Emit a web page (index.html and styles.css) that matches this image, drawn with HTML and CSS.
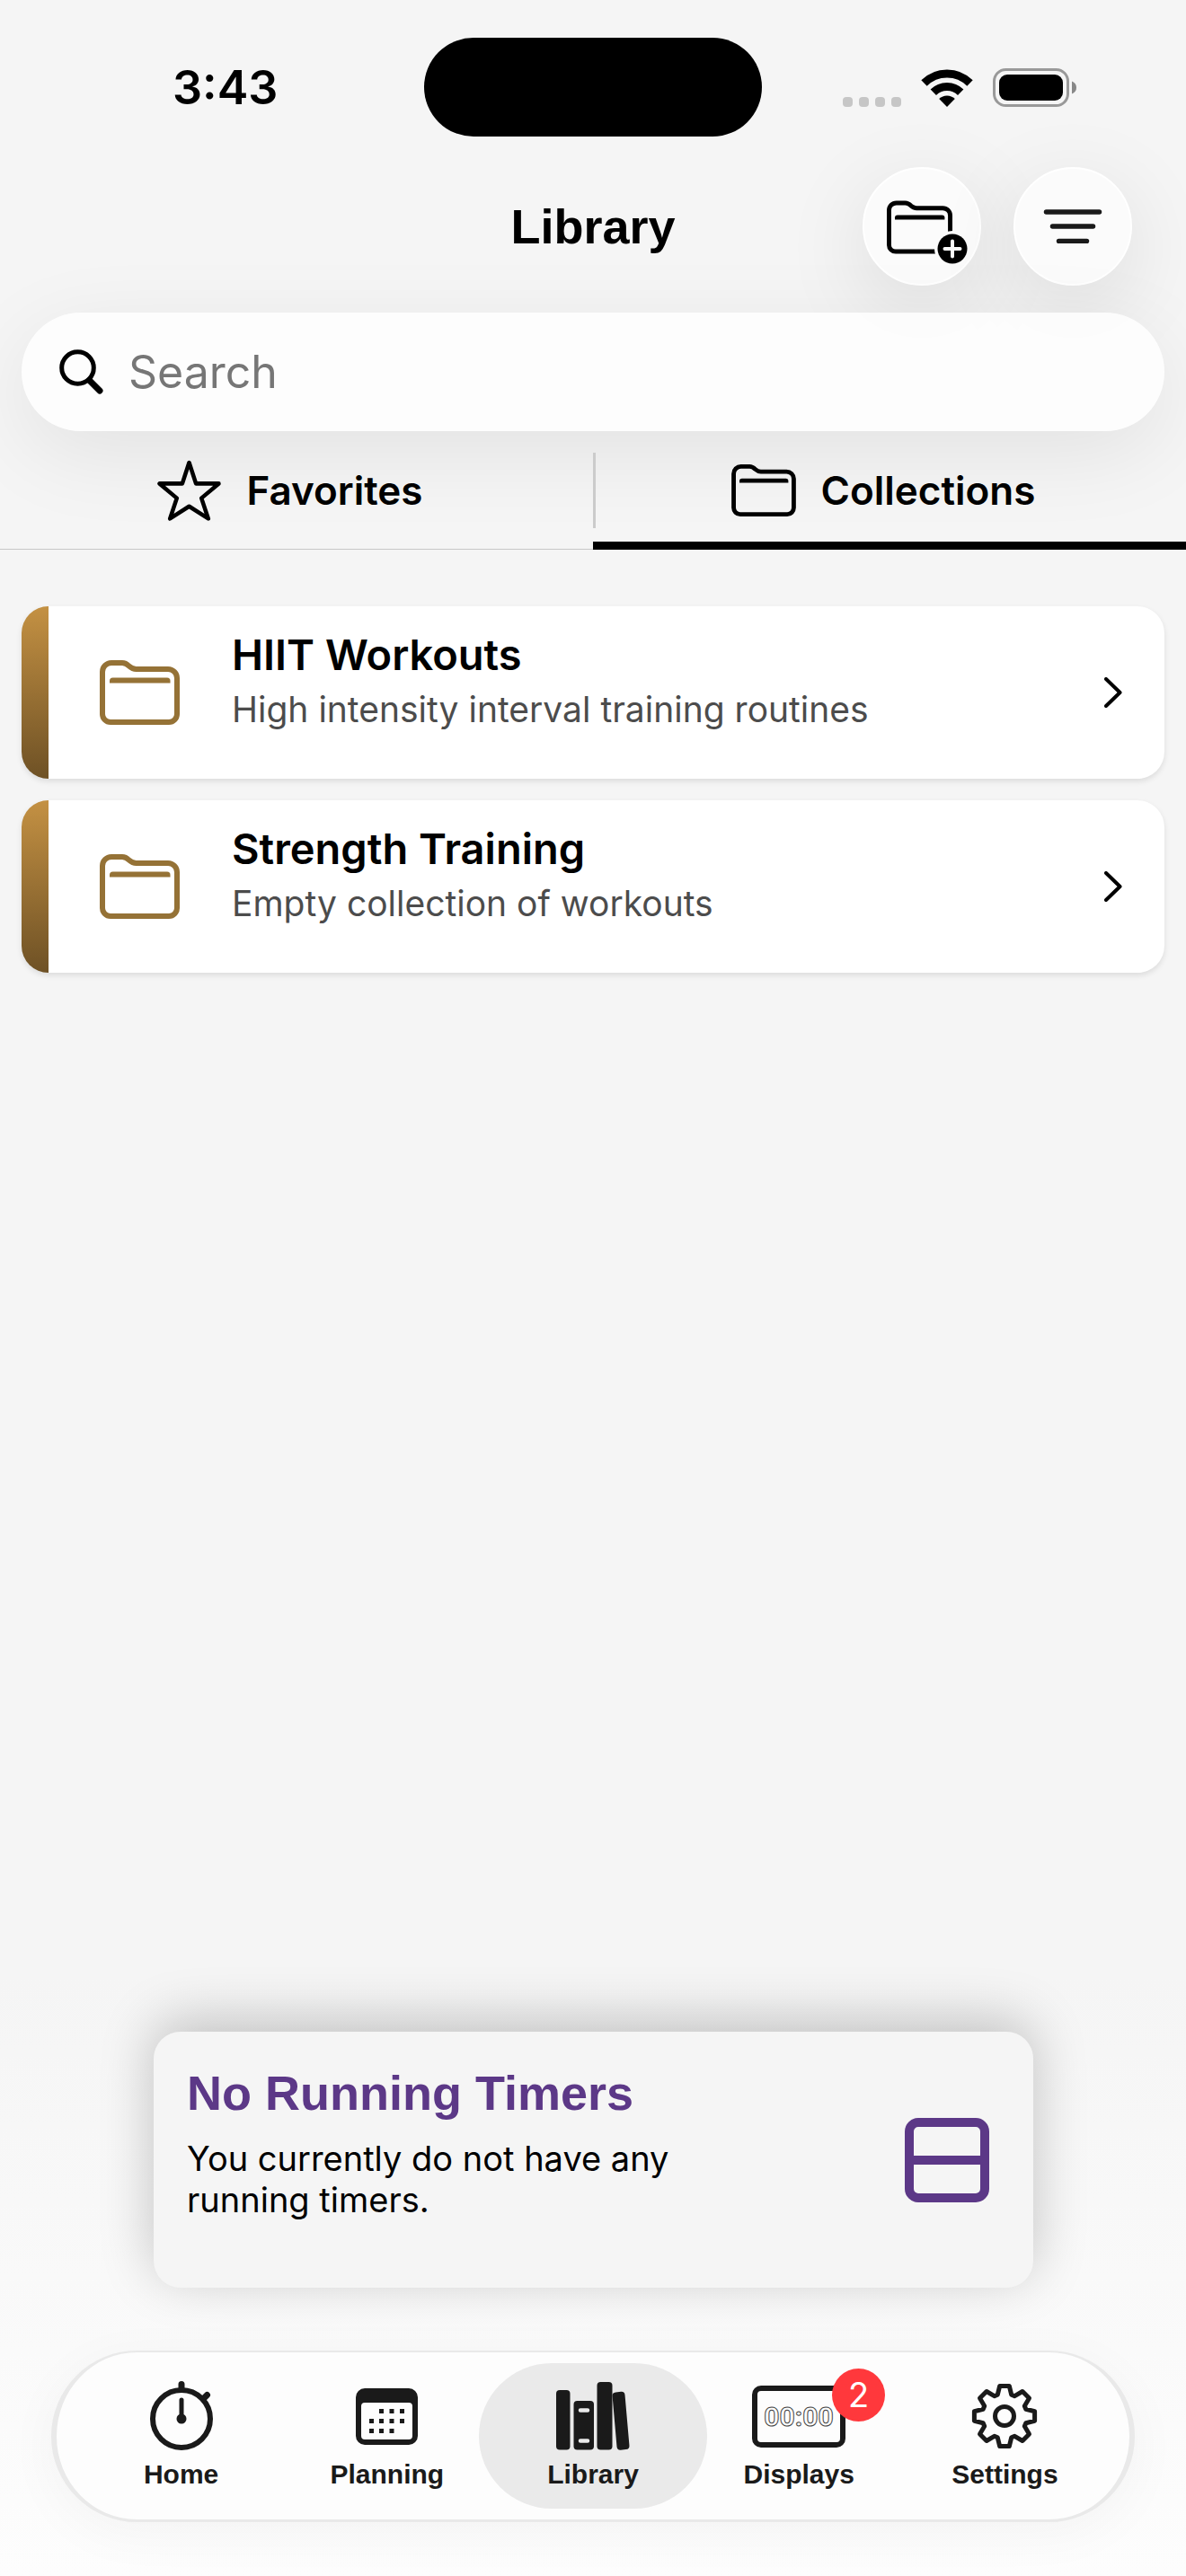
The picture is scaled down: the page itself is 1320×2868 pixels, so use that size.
FILE: index.html
```html
<!DOCTYPE html>
<html lang="en">
<head>
    <meta charset="UTF-8">
    <meta name="viewport" content="width=device-width, initial-scale=1.0">
    <title>Library</title>
    <link rel="stylesheet" href="styles.css">
</head>
<body>

<!-- Shared folder shape -->
<svg class="sprite" aria-hidden="true">
    <symbol id="folder" viewBox="0 0 89 72">
        <path d="M3 13a10 10 0 0 1 10-10h12q4 0 7.5 3.5q4 3.5 8 3.5H76a10 10 0 0 1 10 10V60a9 9 0 0 1-9 9H12a9 9 0 0 1-9-9Z" fill="none" stroke="currentColor" stroke-width="6"/>
        <path d="M11 25.5v-2.5q0-3.5 3.5-3.5H75q3.5 0 3.5 3.5v2.5z" fill="currentColor"/>
    </symbol>
</svg>

<div class="status-bar">
    <span class="time">3:43</span>
    <div class="island"></div>
    <div class="status-icons">
        <svg width="65" height="11" viewBox="0 0 65 11" class="cell">
            <rect width="11" height="11" rx="4"/>
            <rect x="18" width="11" height="11" rx="4"/>
            <rect x="36" width="11" height="11" rx="4"/>
            <rect x="54" width="11" height="11" rx="4"/>
        </svg>
        <svg width="58" height="42" viewBox="0 0 58 42">
            <path d="M3.5 15.5A36 36 0 0 1 54.5 15.5" fill="none" stroke="#000" stroke-width="9"/>
            <path d="M13.8 25.8A21.5 21.5 0 0 1 44.2 25.8" fill="none" stroke="#000" stroke-width="9"/>
            <path d="M29 42L20.2 33A12.5 12.5 0 0 1 37.8 33Z"/>
        </svg>
        <svg width="93" height="43" viewBox="0 0 93 43">
            <rect x="1.5" y="1.5" width="82" height="40" rx="13" fill="none" stroke="#999" stroke-width="3"/>
            <rect x="7" y="7" width="71" height="29" rx="9"/>
            <path d="M88 14.5q5 2 5 7t-5 7z" fill="#888"/>
        </svg>
    </div>
</div>

<header class="title-bar">
    <h1>Library</h1>
    <div class="actions">
        <button type="button" class="round-button" aria-label="New collection">
            <svg width="78" height="58" viewBox="0 0 78 58" class="new-folder">
                <use href="#folder" width="73" height="60" class="bold-folder"/>
                <circle cx="73" cy="54" r="20" fill="#fbfbfb"/>
                <circle cx="73" cy="54" r="16.5"/>
                <path d="M64.5 54h17M73 45.5v17" stroke="#fbfbfb" stroke-width="4" stroke-linecap="round"/>
            </svg>
        </button>
        <button type="button" class="round-button" aria-label="Sort">
            <svg width="66" height="38" viewBox="0 0 66 38" stroke="#1a1a1a" stroke-width="5.5" stroke-linecap="round">
                <path d="M3.5 3h59M10.5 19h45M17.5 35.5h31"/>
            </svg>
        </button>
    </div>
</header>

<div class="search">
    <svg width="49" height="50" viewBox="0 0 49 50" fill="none" stroke="#000" stroke-linecap="round">
        <circle cx="20.5" cy="20.5" r="17.8" stroke-width="5"/>
        <path d="M33.5 34.5L45 46" stroke-width="7"/>
    </svg>
    <input type="search" placeholder="Search" aria-label="Search">
</div>

<nav class="tabs">
    <a href="#favorites" class="tab">
        <svg width="71" height="68" viewBox="0 0 70 67" fill="none" stroke="#000" stroke-width="4.5" stroke-linejoin="round">
            <path d="M35 3L42.5 26H67.5L48.5 42L56 64.5L35 51L14 64.5L21.5 42L2.5 26H27.5Z"/>
        </svg>
        Favorites
    </a>
    <a href="#collections" class="tab selected">
        <svg width="72" height="58"><use href="#folder"/></svg>
        Collections
    </a>
</nav>

<main class="collections">
    <a href="#hiit" class="collection">
        <svg width="89" height="72" class="collection-icon"><use href="#folder"/></svg>
        <div class="collection-text">
            <h2>HIIT Workouts</h2>
            <p>High intensity interval training routines</p>
        </div>
        <svg width="20" height="34" viewBox="0 0 20 34" class="chevron">
            <path d="M2 2L17.5 17L2 32"/>
        </svg>
    </a>
    <a href="#strength" class="collection">
        <svg width="89" height="72" class="collection-icon"><use href="#folder"/></svg>
        <div class="collection-text">
            <h2>Strength Training</h2>
            <p>Empty collection of workouts</p>
        </div>
        <svg width="20" height="34" viewBox="0 0 20 34" class="chevron">
            <path d="M2 2L17.5 17L2 32"/>
        </svg>
    </a>
</main>

<footer class="bottom">
    <section class="timers">
        <div class="timers-text">
            <h2>No Running Timers</h2>
            <p>You currently do not have any running timers.</p>
        </div>
        <button type="button" class="layout-button" aria-label="Change layout">
            <svg width="94" height="94" viewBox="0 0 94 94" fill="none" stroke="#5c3887" stroke-width="10">
                <rect x="5" y="5" width="84" height="84" rx="10"/>
                <path d="M5 47h84"/>
            </svg>
        </button>
    </section>

    <nav class="nav-bar">
        <a href="#home" class="nav-item">
            <span class="nav-icon">
                <svg width="70" height="78" viewBox="-35 -42 70 78" fill="none" stroke="#1a1a1a" stroke-linecap="round">
                    <circle r="32" stroke-width="6"/>
                    <path d="M0-38.5v6M24.5-22.5l4-4" stroke-width="7"/>
                    <path d="M0-21V0" stroke-width="5"/>
                    <circle r="5.5" fill="#1a1a1a" stroke="none"/>
                </svg>
            </span>
            Home
        </a>
        <a href="#planning" class="nav-item">
            <span class="nav-icon">
                <svg width="69" height="63" viewBox="0 0 69 63" fill="#1a1a1a">
                    <path fill-rule="evenodd" d="M10 0H59a10 10 0 0 1 10 10V53a10 10 0 0 1-10 10H10a10 10 0 0 1-10-10V10a10 10 0 0 1 10-10ZM10 16a4 4 0 0 0-4 4V53a4 4 0 0 0 4 4H59a4 4 0 0 0 4-4V20a4 4 0 0 0-4-4Z"/>
                    <path d="M26 25.5h5M37.5 25.5h5M49 25.5h5M15 36.5h5M26 36.5h5M37.5 36.5h5M49 36.5h5M15 47.5h5M26 47.5h5M37.5 47.5h5" stroke="#1a1a1a" stroke-width="5"/>
                </svg>
            </span>
            Planning
        </a>
        <a href="#library" class="nav-item active">
            <span class="nav-icon">
                <svg width="82" height="76" viewBox="0 0 82 76" fill="#1a1a1a">
                    <rect y="9" width="15.5" height="66.5" rx="4"/>
                    <rect x="19.5" y="21" width="22.5" height="54.5" rx="4"/>
                    <rect x="45.5" width="17" height="75.5" rx="4"/>
                    <rect x="65" y="11" width="14" height="64.5" rx="4" transform="rotate(-5 72 43)"/>
                    <path d="M27 31.5h8M27 65.5h8" stroke="#eaeaea" stroke-width="4.5" stroke-linecap="round"/>
                </svg>
            </span>
            Library
        </a>
        <a href="#displays" class="nav-item">
            <span class="nav-icon">
                <svg width="104" height="69" viewBox="0 0 104 69">
                    <rect x="3" y="3" width="98" height="63" rx="7" fill="none" stroke="#1a1a1a" stroke-width="6"/>
                    <text x="52" y="45" class="digits">00:00</text>
                </svg>
                <span class="badge">2</span>
            </span>
            Displays
        </a>
        <a href="#settings" class="nav-item">
            <span class="nav-icon">
                <svg width="74" height="74" viewBox="-37 -37 74 74" fill="none" stroke="#1a1a1a" stroke-width="5" stroke-linejoin="round">
                    <path d="M-5.3-33.6H5.3L7.7-23.8L11.3-22.3L20-27.5L27.5-20L22.3-11.3L23.8-7.7L33.6-5.3V5.3L23.8 7.7L22.3 11.3L27.5 20L20 27.5L11.3 22.3L7.7 23.8L5.3 33.6H-5.3L-7.7 23.8L-11.3 22.3L-20 27.5L-27.5 20L-22.3 11.3L-23.8 7.7L-33.6 5.3V-5.3L-23.8-7.7L-22.3-11.3L-27.5-20L-20-27.5L-11.3-22.3L-7.7-23.8Z"/>
                    <circle r="10.5"/>
                </svg>
            </span>
            Settings
        </a>
    </nav>
</footer>

</body>
</html>
```
FILE: styles.css
```css
* {
    box-sizing: border-box;
}

body {
    margin: 0;
    min-height: 100vh;
    display: flex;
    flex-direction: column;
    background-color: #f5f5f5;
    color: #000;
    font-family: Inter, "Liberation Sans", sans-serif;
}

h1, h2, p {
    margin: 0;
}

a {
    color: inherit;
    text-decoration: none;
}

button {
    border: none;
    padding: 0;
    background: none;
    color: #000;
    cursor: pointer;
}

svg {
    display: block;
    flex: none;
}

.sprite {
    position: absolute;
    width: 0;
    height: 0;
}

/* Status bar */
.status-bar {
    display: grid;
    grid-template-columns: 1fr auto 1fr;
    align-items: center;
    padding: 42px 122px 34px;
}

.time {
    padding-left: 70px;
    font-size: 52px;
    font-weight: 600;
}

.island {
    width: 376px;
    height: 110px;
    border-radius: 55px;
    background-color: #000;
}

.status-icons {
    display: flex;
    justify-content: flex-end;
    align-items: flex-end;
    gap: 22px;
}

.cell {
    fill: #c6c6c6;
}

/* Title */
.title-bar {
    display: grid;
    grid-template-columns: 1fr auto 1fr;
    align-items: center;
    padding: 0 60px;
}

h1 {
    grid-column: 2;
    font-family: "Liberation Sans", sans-serif;
    font-size: 54px;
}

.actions {
    display: flex;
    justify-content: flex-end;
    gap: 36px;
}

.round-button {
    display: flex;
    align-items: center;
    justify-content: center;
    width: 132px;
    height: 132px;
    border: 2px solid #fff;
    border-radius: 50%;
    background-color: #fbfbfb;
    box-shadow: 0 24px 96px rgba(0, 0, 0, 0.1);
}

.new-folder {
    overflow: visible;
}

.bold-folder {
    stroke-width: 7;
}

/* Search */
.search {
    display: flex;
    align-items: center;
    gap: 28px;
    height: 132px;
    margin: 30px 24px 0;
    padding: 0 42px;
    border-radius: 66px;
    background-color: rgba(255, 255, 255, 0.8);
    box-shadow: 0 24px 96px rgba(0, 0, 0, 0.08);
}

.search input {
    flex: 1;
    min-width: 0;
    padding: 0;
    border: none;
    outline: none;
    background: none;
    font-family: inherit;
    font-size: 50px;
}

.search input::placeholder {
    color: #767676;
}

/* Tabs */
.tabs {
    display: flex;
    position: relative;
}

.tabs::before {
    content: "";
    position: absolute;
    top: 24px;
    left: 50%;
    width: 3px;
    height: 84px;
    background-color: #cbcbcb;
}

.tab {
    flex: 1;
    display: flex;
    align-items: center;
    justify-content: center;
    gap: 28px;
    height: 132px;
    padding-right: 14px;
    border-bottom: 1px solid #c8c8c8;
    font-size: 44px;
    font-weight: 600;
}

.tab.selected {
    padding: 8px 14px 0 0;
    border-bottom: 9px solid #000;
}

/* Collections */
.collections {
    display: flex;
    flex-direction: column;
    gap: 24px;
    margin: 63px 24px;
}

.collection {
    display: flex;
    align-items: center;
    min-height: 192px;
    padding-right: 47px;
    border-radius: 30px;
    background: linear-gradient(#c49143, #6e5125) 0 0 / 30px 100% no-repeat #fff;
    box-shadow: 0 3px 6px rgba(0, 0, 0, 0.1);
}

.collection-icon {
    margin-left: 87px;
    color: #957236;
}

.collection-text {
    flex: 1;
    align-self: flex-start;
    padding: 24px 0 24px 58px;
}

.collection-text h2 {
    font-size: 47px;
    font-weight: 600;
    line-height: 60px;
}

.collection-text p {
    margin-top: 8px;
    color: #4c4c4c;
    font-size: 39px;
    line-height: 46px;
}

.chevron {
    fill: none;
    stroke: #000;
    stroke-width: 4;
    stroke-linecap: round;
    stroke-linejoin: round;
}

/* Running timers panel */
.bottom {
    margin-top: auto;
    padding: 62px 57px 60px;
    background: linear-gradient(#f5f5f5, #fdfdfd);
}

.timers {
    display: flex;
    align-items: center;
    justify-content: space-between;
    min-height: 285px;
    margin: 0 113px 70px 114px;
    padding: 0 49px 0 37px;
    border-radius: 30px;
    background-color: #f5f5f5;
    box-shadow: 0 -12px 60px rgba(0, 0, 0, 0.22);
}

.timers-text {
    align-self: flex-start;
    max-width: 580px;
    padding-top: 38px;
}

.timers h2 {
    color: #5c3887;
    font-family: "Liberation Sans", sans-serif;
    font-size: 54px;
    line-height: 60px;
}

.timers p {
    margin-top: 20px;
    font-size: 38px;
    line-height: 46px;
}

/* Bottom navigation */
.nav-bar {
    display: flex;
    padding: 12px 24px;
    border: 6px solid #e9e9e9;
    border-width: 2px 6px 3px;
    border-radius: 96px;
    background-color: #fdfdfd;
    box-shadow: 0 12px 60px rgba(0, 0, 0, 0.04);
}

.nav-item {
    flex: 1;
    display: flex;
    flex-direction: column;
    align-items: center;
    gap: 8px;
    padding: 20px 0;
    color: #1a1a1a;
    font-family: "Liberation Sans", sans-serif;
    font-size: 30px;
    font-weight: 700;
    line-height: 36px;
}

.nav-item.active {
    margin: 0 -12px;
    padding: 20px 12px;
    border-radius: 81px;
    background-color: #eaeaea;
}

.nav-icon {
    position: relative;
    display: flex;
    align-items: center;
    height: 78px;
}

.digits {
    fill: #fdfdfd;
    stroke: #444;
    stroke-width: 1;
    font-family: Roboto, sans-serif;
    font-size: 30px;
    text-anchor: middle;
}

.badge {
    position: absolute;
    top: -14px;
    right: -44px;
    width: 59px;
    border-radius: 50%;
    background-color: #ff383c;
    color: #fff;
    font-family: Inter, sans-serif;
    font-size: 38px;
    font-weight: 400;
    line-height: 59px;
    text-align: center;
}
```
